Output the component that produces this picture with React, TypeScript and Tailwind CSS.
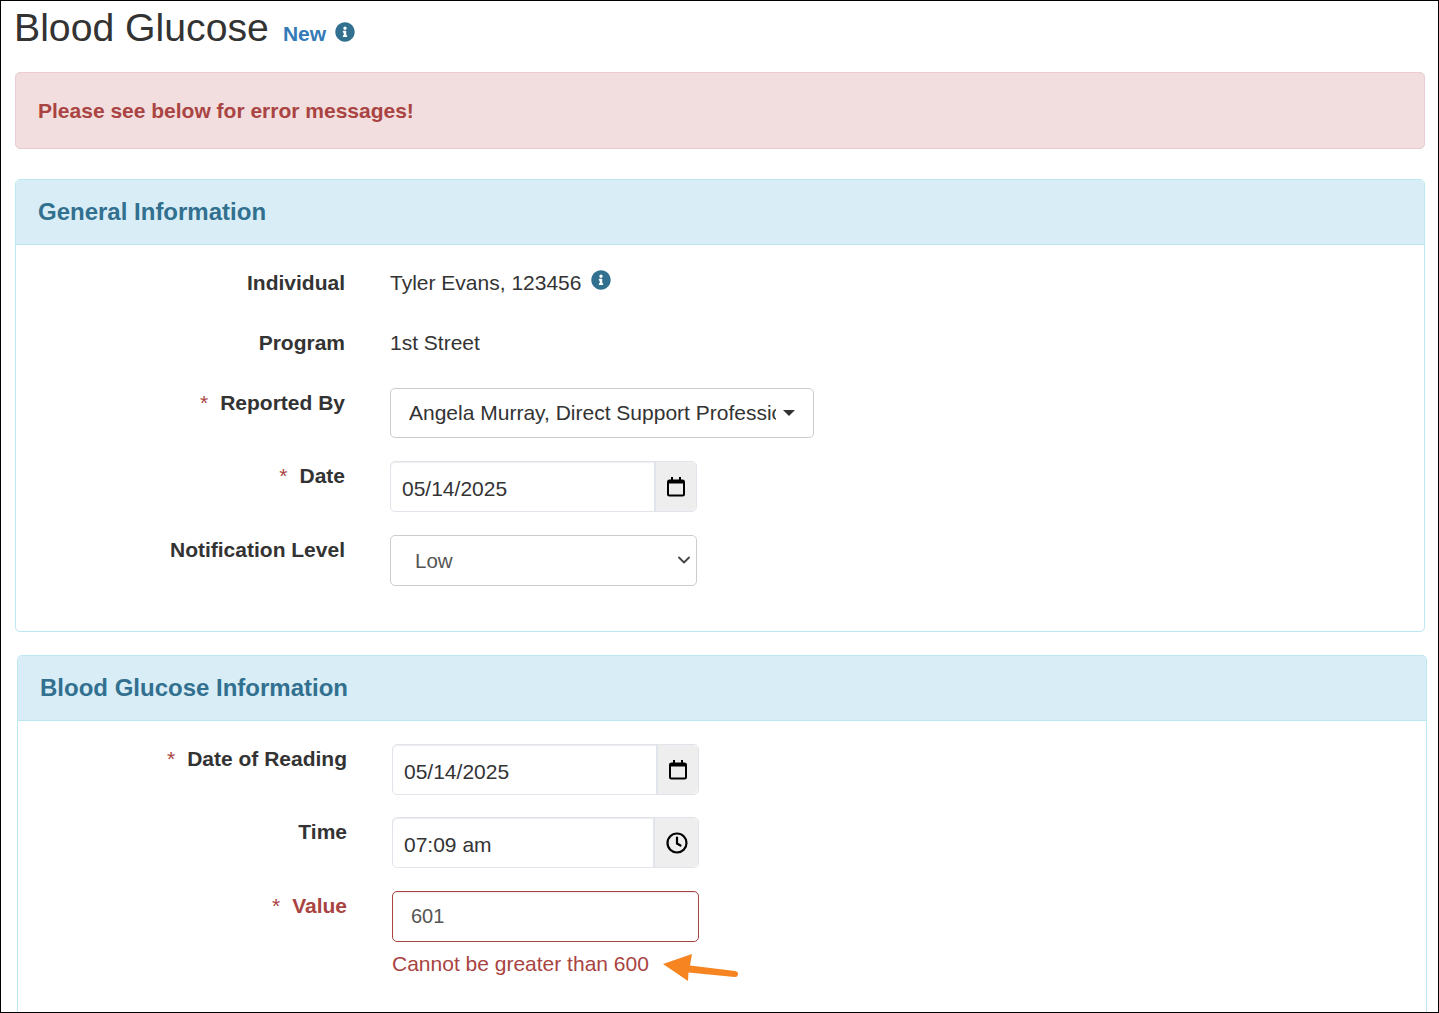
import { ReactNode } from 'react';
import { FaInfoCircle } from 'react-icons/fa';
import { ChevronDown } from 'lucide-react';

function CalendarIcon() {
  return (
    <svg width="20" height="21" viewBox="0 0 20 21" fill="none">
      <rect x="2" y="4.5" width="16" height="15" rx="1.5" stroke="#000" strokeWidth="2" />
      <rect x="2" y="4" width="16" height="3.5" fill="#000" />
      <rect x="5" y="1" width="2" height="4" fill="#000" />
      <rect x="13" y="1" width="2" height="4" fill="#000" />
    </svg>
  );
}

function ClockIcon() {
  return (
    <svg width="22" height="22" viewBox="0 0 22 22" fill="none" stroke="#000" strokeWidth="2.2" strokeLinecap="round">
      <circle cx="11" cy="11" r="9.5" />
      <path d="M11 5.5v6l3.5 2" />
    </svg>
  );
}

function Row({ label, required, error, className, children }: { label: string; required?: boolean; error?: boolean; className?: string; children: ReactNode }) {
  return (
    <div className={`flex ${className || ''}`}>
      <label className={`w-[329px] shrink-0 pt-[3px] text-right font-bold leading-6 ${error ? 'text-[#a94442]' : 'text-[#333]'}`}>
        {required && <span className="mr-3 font-normal text-[#a94442]">*</span>}
        {label}
      </label>
      <div className="ml-[45px]">{children}</div>
    </div>
  );
}

function AddonInput({ value, icon, addonWidth }: { value: string; icon: ReactNode; addonWidth: string }) {
  return (
    <div className="flex h-[51px] w-[307px] rounded-[5px] border border-[#e1e4ea]">
      <input
        readOnly
        value={value}
        className="h-full min-w-0 flex-1 rounded-l-[5px] pt-[4px] pl-[11px] text-[21px] text-[#333] shadow-[inset_0_1px_1px_rgba(0,0,0,0.075)] outline-none"
      />
      <div className={`flex items-center justify-center rounded-r-[5px] border-l-2 border-[#e1e4ea] bg-[#eee] ${addonWidth}`}>
        {icon}
      </div>
    </div>
  );
}

export default function App() {
  return (
    <div className="h-[1013px] w-[1439px] overflow-hidden border border-black bg-white font-['Liberation_Sans',Arial,sans-serif] text-[21px] text-[#333]">
      <div className="flex h-[71px] items-start pl-[13px]">
        <h1 className="mt-[4px] text-[39.2px] leading-[46px] font-normal">Blood Glucose</h1>
        <span className="mt-[21px] ml-[14px] leading-6 font-bold text-[#337ab7]">New</span>
        <FaInfoCircle className="mt-[21px] ml-[9px] text-[#31708f]" size={20} />
      </div>

      <div className="ml-[14px] flex h-[77px] w-[1410px] items-center rounded-[5px] border border-[#ebccd1] bg-[#f2dede] pl-[22px] font-bold text-[#a94442]">
        Please see below for error messages!
      </div>

      <section className="mt-[30px] ml-[14px] h-[453px] w-[1410px] rounded-[5px] border border-[#bce8f1]">
        <div className="flex h-[65px] items-center rounded-t-[4px] border-b border-[#bce8f1] bg-[#d9edf7] pl-[22px] text-[24px] font-bold text-[#31708f]">
          General Information
        </div>
        <div className="pt-[26px]">
          <div className="flex leading-6">
            <span className="w-[329px] text-right font-bold">Individual</span>
            <span className="ml-[45px]">Tyler Evans, 123456</span>
            <FaInfoCircle className="mt-[-1px] ml-[10px] text-[#31708f]" size={20} />
          </div>
          <div className="mt-[36px] flex leading-6">
            <span className="w-[329px] text-right font-bold">Program</span>
            <span className="ml-[45px]">1st Street</span>
          </div>
          <Row label="Reported By" required className="mt-[33px]">
            <div className="flex h-[50px] w-[424px] items-center rounded-[5px] border border-[#ccc] pr-[18px] pl-[18px]">
              <span className="flex-1 overflow-hidden whitespace-nowrap">Angela Murray, Direct Support Professional</span>
              <span className="ml-[7px] h-0 w-0 border-x-[6px] border-t-[6px] border-x-transparent border-t-[#333]" />
            </div>
          </Row>
          <Row label="Date" required className="mt-[23px]">
            <AddonInput value="05/14/2025" icon={<CalendarIcon />} addonWidth="w-[42px]" />
          </Row>
          <Row label="Notification Level" className="mt-[23px]">
            <div className="relative w-[307px]">
              <select className="h-[51px] w-full appearance-none rounded-[5px] border border-[#ccc] bg-white pt-[2px] pl-[24px] text-[20.5px] text-[#555]">
                <option>Low</option>
              </select>
              <ChevronDown className="pointer-events-none absolute top-[15px] right-[3px] text-[#444]" size={20} strokeWidth={2.2} />
            </div>
          </Row>
        </div>
      </section>

      <section className="mt-[23px] ml-[16px] w-[1410px] rounded-t-[5px] border border-b-0 border-[#bce8f1] pb-[40px]">
        <div className="flex h-[65px] items-center rounded-t-[4px] border-b border-[#bce8f1] bg-[#d9edf7] pl-[22px] text-[24px] font-bold text-[#31708f]">
          Blood Glucose Information
        </div>
        <div className="pt-[23px]">
          <Row label="Date of Reading" required>
            <AddonInput value="05/14/2025" icon={<CalendarIcon />} addonWidth="w-[42px]" />
          </Row>
          <Row label="Time" className="mt-[22px]">
            <AddonInput value="07:09 am" icon={<ClockIcon />} addonWidth="w-[45px]" />
          </Row>
          <Row label="Value" required error className="mt-[23px]">
            <input
              readOnly
              value="601"
              className="block h-[51px] w-[307px] rounded-[5px] border border-[#a94442] pl-[18px] text-[20px] text-[#555] shadow-[inset_0_1px_1px_rgba(0,0,0,0.075)] outline-none"
            />
            <div className="mt-[10px] flex items-start leading-6 text-[#a94442]">
              Cannot be greater than 600
              <svg className="mt-[2px] ml-[14px]" width="76" height="28" viewBox="0 0 76 28" fill="none">
                <path d="M0 10 L29 0 L27 11.5 L72 17 Q75.5 17.6 75 20.5 Q74.5 23.3 71.5 23 L25.5 18.5 L25 27 Z" fill="#f68420" />
              </svg>
            </div>
          </Row>
        </div>
      </section>
    </div>
  );
}
